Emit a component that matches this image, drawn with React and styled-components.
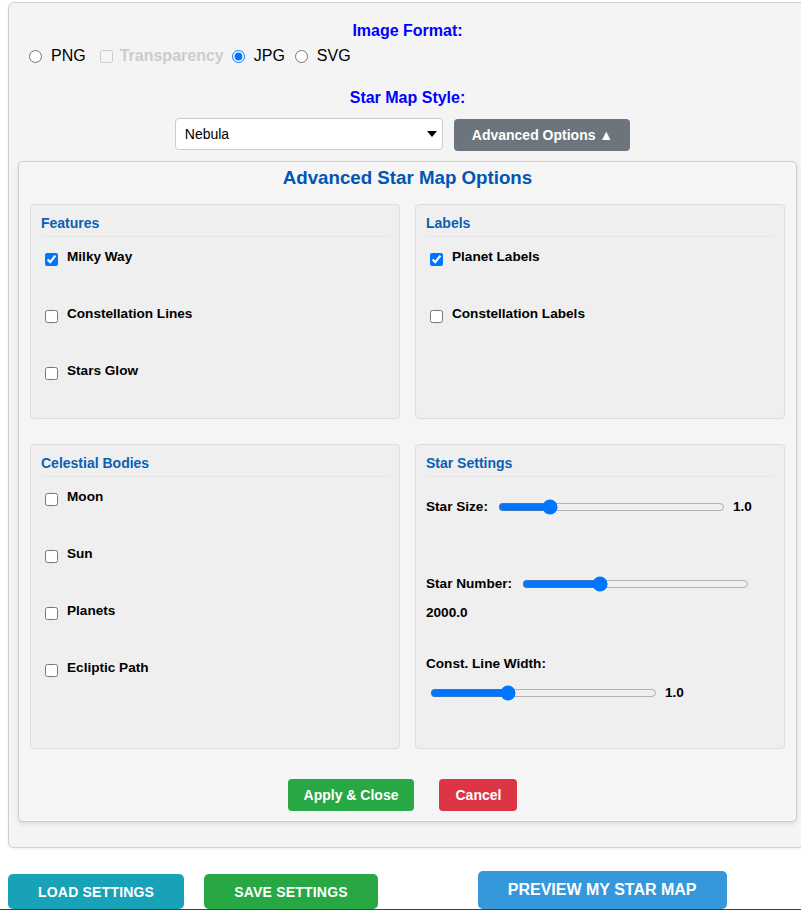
import React from "react";
import styled, { createGlobalStyle } from "styled-components";

const Global = createGlobalStyle`
  html, body {
    margin: 0;
    padding: 0;
    background: #ffffff;
    overflow: hidden;
    font-family: "Liberation Sans", Arial, sans-serif;
  }
  * { box-sizing: border-box; }
`;

const Page = styled.div`
  padding: 2px 0 0 8px;
  width: 801px;
`;

const OuterPanel = styled.section`
  box-sizing: content-box;
  width: 779px;
  padding: 19px 9px 25px 9px;
  background: #f4f4f4;
  border: 1px solid #cfcfcf;
  border-radius: 6px;
  box-shadow: 0 1px 3px rgba(0, 0, 0, 0.08);
`;

const FormatHeading = styled.h3`
  margin: ${(p) => p.$mt || 0}px 0 0;
  text-align: center;
  font-size: 16px;
  line-height: 18px;
  font-weight: bold;
  color: #0000ff;
`;

const RadioRow = styled.div`
  display: flex;
  align-items: center;
  height: 18px;
  margin-top: 7px;
  padding-left: 11px;
`;

const Option = styled.label`
  display: inline-flex;
  align-items: center;
  gap: ${(p) => (p.$check ? 7 : 9)}px;
  margin-right: ${(p) => p.$mr || 0}px;
  font-size: 16px;
  line-height: 18px;
  color: ${(p) => (p.$disabled ? "#cccccc" : "#000000")};
  font-weight: ${(p) => (p.$disabled ? "bold" : "normal")};
`;

const Radio = styled.input.attrs({ type: "radio" })`
  width: 13px;
  height: 13px;
  margin: 0;
`;

const SmallCheck = styled.input.attrs({ type: "checkbox" })`
  width: 13px;
  height: 13px;
  margin: 0;
`;

const ControlRow = styled.div`
  display: flex;
  justify-content: center;
  align-items: flex-start;
  gap: 11px;
  margin-top: 11px;
  padding-right: 10px;
`;

const SelectWrap = styled.div`
  position: relative;
  width: 268px;
  height: 32px;
`;

const StyleSelect = styled.select`
  appearance: none;
  width: 100%;
  height: 100%;
  padding: 0 24px 0 9px;
  border: 1px solid #cccccc;
  border-radius: 4px;
  background: #ffffff;
  font-family: "Liberation Sans", Arial, sans-serif;
  font-size: 14px;
  color: #000000;
`;

const Caret = styled.svg`
  position: absolute;
  right: 6px;
  top: 13px;
  pointer-events: none;
`;

const GrayButton = styled.button`
  height: 32px;
  padding: 0 17px 0 18px;
  margin-top: 1px;
  border: none;
  border-radius: 4px;
  background: #6c757d;
  color: #ffffff;
  font-family: "Liberation Sans", Arial, sans-serif;
  font-size: 14px;
  font-weight: bold;
`;

const AdvancedPanel = styled.div`
  margin-top: 10px;
  padding: 4px 11px 10px;
  background: #f5f5f5;
  border: 1px solid #cccccc;
  border-radius: 5px;
  box-shadow: 0 2px 4px rgba(0, 0, 0, 0.1);
`;

const PanelTitle = styled.h2`
  margin: 0 0 15px;
  text-align: center;
  font-size: 18.72px;
  line-height: 23px;
  font-weight: bold;
  color: #0056b3;
`;

const CardGrid = styled.div`
  display: grid;
  grid-template-columns: 1fr 1fr;
  column-gap: 15px;
  row-gap: 25px;
`;

const Card = styled.div`
  padding: 10px;
  background: #efefef;
  border: 1px solid #dddddd;
  border-radius: 4px;
`;

const CardTitle = styled.h4`
  margin: 0 0 11px;
  padding-bottom: 5px;
  font-size: 14px;
  line-height: 16px;
  font-weight: bold;
  color: #0a5fb5;
  border-bottom: 1px solid rgba(0, 0, 0, 0.035);
`;

const CheckList = styled.div`
  display: flex;
  flex-direction: column;
  gap: 40px;
  padding-bottom: 29px;
`;

const CheckRow = styled.label`
  display: flex;
  align-items: flex-start;
  height: 17px;
  font-size: 13.6px;
  line-height: 17px;
  font-weight: bold;
  color: #000000;
`;

const Check = styled.input.attrs({ type: "checkbox" })`
  width: 13px;
  height: 13px;
  margin: 5px 9px 0 4px;
  flex-shrink: 0;
`;

const SettingsList = styled.div`
  padding-top: 10px;
`;

const Setting = styled.div`
  display: flex;
  flex-wrap: wrap;
  align-items: center;
  column-gap: 6px;
  row-gap: 12px;
  margin-bottom: ${(p) => p.$after}px;
`;

const SettingLabel = styled.label`
  font-size: 13.6px;
  line-height: 17px;
  font-weight: bold;
  color: #000000;
`;

const Range = styled.input.attrs({ type: "range" })`
  width: 227px;
  height: 16px;
  margin: 0 2px 0 4px;
`;

const Value = styled.span`
  font-size: 13.6px;
  line-height: 17px;
  font-weight: bold;
  color: #000000;
`;

const PanelActions = styled.div`
  display: flex;
  justify-content: center;
  gap: 25px;
  margin-top: 30px;
  padding-right: 10px;
`;

const ActionButton = styled.button`
  height: 32px;
  padding: 0 16px;
  border: none;
  border-radius: 4px;
  background: ${(p) => p.$bg};
  color: #ffffff;
  font-family: "Liberation Sans", Arial, sans-serif;
  font-size: 14px;
  font-weight: bold;
`;

const BottomRow = styled.div`
  display: flex;
  align-items: flex-end;
  margin-top: 23px;
`;

const BigButton = styled.button`
  height: ${(p) => (p.$big ? 38 : 35)}px;
  padding: 0 30px;
  margin-left: ${(p) => p.$ml || 0}px;
  border: none;
  border-radius: 5px;
  background: ${(p) => p.$bg};
  color: #ffffff;
  font-family: "Liberation Sans", Arial, sans-serif;
  font-size: ${(p) => (p.$big ? 16 : 14)}px;
  font-weight: bold;
  text-transform: uppercase;
  letter-spacing: ${(p) => (p.$big ? 0 : 0.2)}px;
`;

const Footer = styled.div`
  margin-left: -8px;
  height: 12px;
  background: #3d3d3d;
`;

const features = [
  { label: "Milky Way", on: true },
  { label: "Constellation Lines" },
  { label: "Stars Glow" },
];
const labels = [{ label: "Planet Labels", on: true }, { label: "Constellation Labels" }];
const bodies = [
  { label: "Moon" },
  { label: "Sun" },
  { label: "Planets" },
  { label: "Ecliptic Path" },
];

function CheckCard({ title, items }) {
  return (
    <Card>
      <CardTitle>{title}</CardTitle>
      <CheckList>
        {items.map((it) => (
          <CheckRow key={it.label}>
            <Check defaultChecked={!!it.on} />
            {it.label}
          </CheckRow>
        ))}
      </CheckList>
    </Card>
  );
}

export default function App() {
  return (
    <>
      <Global />
      <Page>
        <OuterPanel>
          <FormatHeading>Image Format:</FormatHeading>
          <RadioRow>
            <Option $mr={14}>
              <Radio name="fmt" />
              PNG
            </Option>
            <Option $check $disabled $mr={8}>
              <SmallCheck disabled />
              Transparency
            </Option>
            <Option $mr={10}>
              <Radio name="fmt" defaultChecked />
              JPG
            </Option>
            <Option>
              <Radio name="fmt" />
              SVG
            </Option>
          </RadioRow>
          <FormatHeading $mt={24}>Star Map Style:</FormatHeading>
          <ControlRow>
            <SelectWrap>
              <StyleSelect defaultValue="nebula">
                <option value="nebula">Nebula</option>
                <option value="classic">Classic</option>
              </StyleSelect>
              <Caret width="10" height="6" viewBox="0 0 10 6">
                <path d="M0 0 L10 0 L5 6 Z" fill="#000" />
              </Caret>
            </SelectWrap>
            <GrayButton>Advanced Options ▲</GrayButton>
          </ControlRow>

          <AdvancedPanel>
            <PanelTitle>Advanced Star Map Options</PanelTitle>
            <CardGrid>
              <CheckCard title="Features" items={features} />
              <CheckCard title="Labels" items={labels} />
              <CheckCard title="Celestial Bodies" items={bodies} />
              <Card>
                <CardTitle>Star Settings</CardTitle>
                <SettingsList>
                  <Setting $after={60}>
                    <SettingLabel>Star Size:</SettingLabel>
                    <Range min="0.2" max="4" step="0.1" defaultValue="1" />
                    <Value>1.0</Value>
                  </Setting>
                  <Setting $after={34}>
                    <SettingLabel>Star Number:</SettingLabel>
                    <Range min="500" max="5000" step="100" defaultValue="2000" />
                    <Value>2000.0</Value>
                  </Setting>
                  <Setting $after={37}>
                    <SettingLabel>Const. Line Width:</SettingLabel>
                    <Range min="0.5" max="2" step="0.1" defaultValue="1" />
                    <Value>1.0</Value>
                  </Setting>
                </SettingsList>
              </Card>
            </CardGrid>
            <PanelActions>
              <ActionButton $bg="#28a745">Apply &amp; Close</ActionButton>
              <ActionButton $bg="#dc3545">Cancel</ActionButton>
            </PanelActions>
          </AdvancedPanel>
        </OuterPanel>

        <BottomRow>
          <BigButton $bg="#17a2b8">Load Settings</BigButton>
          <BigButton $bg="#28a745" $ml={20}>Save Settings</BigButton>
          <BigButton $bg="#3498db" $ml={100} $big>Preview My Star Map</BigButton>
        </BottomRow>
        <Footer />
      </Page>
    </>
  );
}
